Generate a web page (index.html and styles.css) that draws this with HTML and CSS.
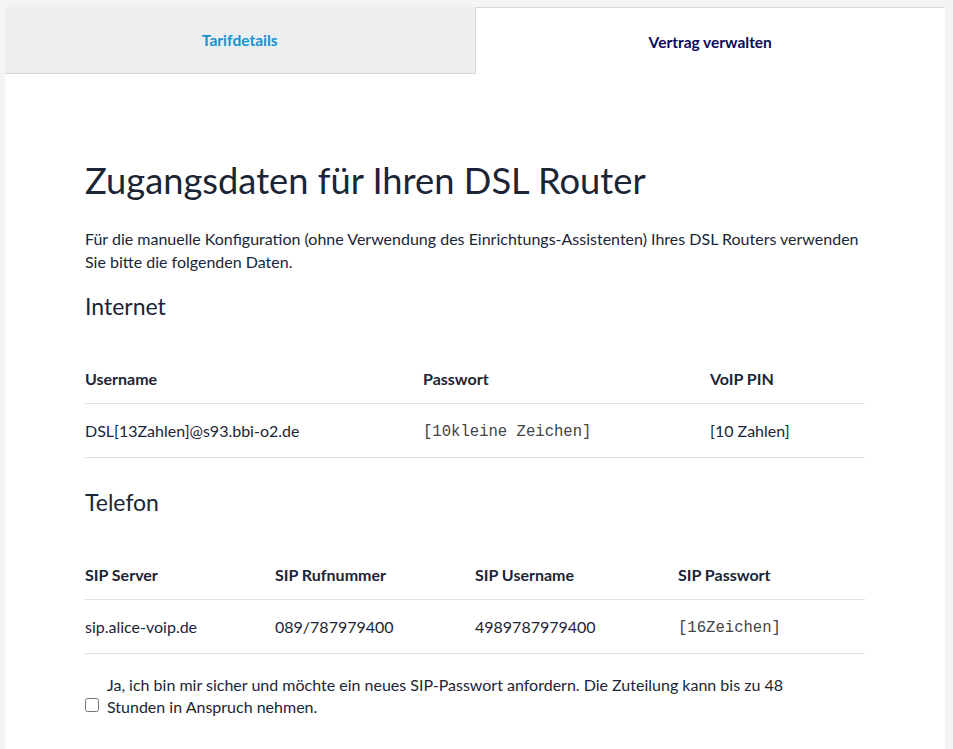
FILE: index.html
```html
<!DOCTYPE html>
<html lang="de">
<head>
<meta charset="utf-8">
<link rel="stylesheet" href="styles.css">
</head>
<body>
<div class="card">
  <div class="tabs">
    <div class="tab inactive">Tarifdetails</div>
    <div class="tab active">Vertrag verwalten</div>
  </div>
  <div class="content">
    <h1>Zugangsdaten für Ihren DSL Router</h1>
    <p class="intro">Für die manuelle Konfiguration (ohne Verwendung des Einrichtungs-Assistenten) Ihres DSL Routers verwenden Sie bitte die folgenden Daten.</p>
    <h2>Internet</h2>
    <table class="data t-internet">
      <thead>
        <tr><th class="c1">Username</th><th class="c2">Passwort</th><th>VoIP PIN</th></tr>
      </thead>
      <tbody>
        <tr><td>DSL[13Zahlen]@s93.bbi-o2.de</td><td class="mono">[10kleine Zeichen]</td><td>[10 Zahlen]</td></tr>
      </tbody>
    </table>
    <h2 class="tel">Telefon</h2>
    <table class="data t-tel">
      <thead>
        <tr><th class="d1">SIP Server</th><th class="d2">SIP Rufnummer</th><th class="d3">SIP Username</th><th>SIP Passwort</th></tr>
      </thead>
      <tbody>
        <tr><td>sip.alice-voip.de</td><td>089/787979400</td><td>4989787979400</td><td class="mono">[16Zeichen]</td></tr>
      </tbody>
    </table>
    <label class="confirm">
      <input type="checkbox">
      <span>Ja, ich bin mir sicher und möchte ein neues SIP-Passwort anfordern. Die Zuteilung kann bis zu 48 Stunden in Anspruch nehmen.</span>
    </label>
  </div>
</div>
</body>
</html>
```
FILE: styles.css
```css
html, body {
  margin: 0;
  padding: 0;
  background: #f3f4f6;
}
body {
  font-family: Lato, "Noto Sans", sans-serif;
  color: #1b2536;
  padding: 7px 8px 0 5px;
}
.card {
  background: #fff;
  min-height: 742px;
}
.tabs {
  display: flex;
  height: 67px;
}
.tab {
  flex: 1;
  display: flex;
  align-items: center;
  justify-content: center;
  font-size: 15.5px;
  font-weight: 700;
  box-sizing: border-box;
}
.tab.inactive {
  background: #eceef0;
  color: #1593cf;
  border-top: 1px solid #eceef0;
  border-bottom: 1px solid #d6d8db;
  border-right: 1px solid #d6d8db;
  padding-bottom: 2px;
}
.tab.active {
  background: #fff;
  color: #0a0a5c;
  border-top: 1px solid #d6d8db;
  padding-top: 2px;
}
.content {
  padding: 83px 80px 0 80px;
}
h1 {
  margin: 0;
  font-size: 36.3px;
  font-weight: 400;
  line-height: 46px;
  color: #1b2536;
}
.intro {
  margin: 24px 0 0;
  font-size: 16px;
  line-height: 23px;
}
h2 {
  margin: 18px 0 0;
  font-size: 23px;
  font-weight: 400;
  line-height: 30px;
}
h2.tel {
  margin-top: 29px;
}
.data {
  width: 780px;
  border-collapse: collapse;
  margin-top: 36px;
  font-size: 16px;
}
.data th {
  text-align: left;
  font-weight: 700;
  padding: 12px 0 14px;
  border-bottom: 1px solid #dfe1e4;
  line-height: 20px;
}
.data td {
  padding: 17px 0 16px;
  border-bottom: 1px solid #dfe1e4;
  line-height: 20px;
}
.data td.mono {
  font-family: "Liberation Mono", monospace;
  font-size: 15.6px;
  color: #444;
  padding-top: 18px;
  padding-bottom: 15px;
}
.t-internet .c1 { width: 338px; }
.t-internet .c2 { width: 287px; }
.t-tel .d1 { width: 190px; }
.t-tel .d2 { width: 200px; }
.t-tel .d3 { width: 203px; }
.confirm {
  display: flex;
  align-items: flex-end;
  margin-top: 20px;
  width: 700px;
  font-size: 16px;
  line-height: 22px;
}
.confirm input {
  margin: 0 8px 6px 0;
  width: 14px;
  height: 14px;
  flex: none;
}
```
